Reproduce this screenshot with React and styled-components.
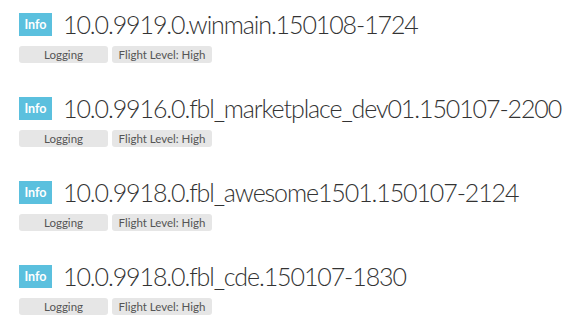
import React from 'react'
import styled, { createGlobalStyle } from 'styled-components'

const GlobalStyle = createGlobalStyle`
  body {
    margin: 0;
    background: #fff;
    font-family: 'Lato', 'Noto Sans', sans-serif;
  }
`

const builds = [
  '10.0.9919.0.winmain.150108-1724',
  '10.0.9916.0.fbl_marketplace_dev01.150107-2200',
  '10.0.9918.0.fbl_awesome1501.150107-2124',
  '10.0.9918.0.fbl_cde.150107-1830',
]

const App = () => {
  const items = builds.map(name => (
    <Item key={name}>
      <Header>
        <Badge>Info</Badge>
        <Title>{name}</Title>
      </Header>
      <Tags>
        <Tag width={89}>Logging</Tag>
        <Tag width={100}>Flight Level: High</Tag>
      </Tags>
    </Item>
  ))

  return (
    <>
      <GlobalStyle />
      <List>{items}</List>
    </>
  )
}

export default App

const List = styled.section`
  padding: 10px 0 0 19px;
  display: flex;
  flex-direction: column;
  gap: 31px;
`

const Item = styled.article`
  display: flex;
  flex-direction: column;
`

const Header = styled.div`
  height: 29px;
  display: flex;
  align-items: center;
  gap: 11px;
`

const Badge = styled.span`
  flex-shrink: 0;
  height: 23px;
  width: 33px;
  display: flex;
  align-items: center;
  justify-content: center;
  background-color: #5bc0de;
  color: #fff;
  font-size: 12.5px;
  font-weight: 700;
`

const Title = styled.h2`
  margin: 0;
  font-size: 25px;
  font-weight: 300;
  letter-spacing: -1.1px;
  color: #333;
  white-space: nowrap;
  line-height: 29px;
`

const Tags = styled.div`
  margin-top: 7px;
  display: flex;
  gap: 4px;
`

const Tag = styled.span`
  width: ${props => props.width}px;
  height: 17px;
  line-height: 17px;
  border-radius: 3px;
  background-color: #e6e6e6;
  color: #555;
  font-size: 11.5px;
  text-align: center;
`
